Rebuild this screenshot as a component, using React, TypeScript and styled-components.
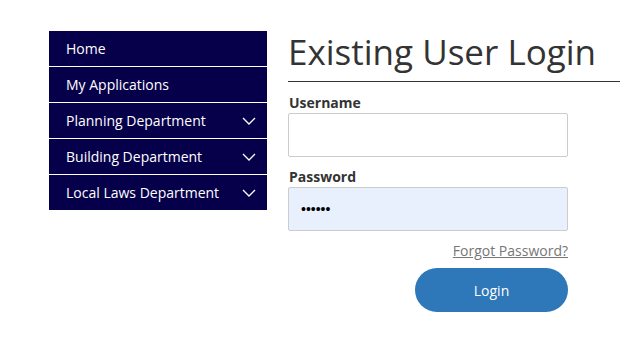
import React from 'react';
import styled, { createGlobalStyle } from 'styled-components';

const GlobalStyle = createGlobalStyle`
  body {
    margin: 0;
    background: #fff;
    font-family: "Open Sans", "Liberation Sans", sans-serif;
    color: #333;
  }
`;

const menu = [
  { label: 'Home', sub: false },
  { label: 'My Applications', sub: false },
  { label: 'Planning Department', sub: true },
  { label: 'Building Department', sub: true },
  { label: 'Local Laws Department', sub: true },
];

function Chevron() {
  return (
    <svg width="14" height="8" viewBox="0 0 14 8" fill="none">
      <path d="M1 1l6 6 6-6" stroke="#fff" strokeWidth="1.3" />
    </svg>
  );
}

export default function App() {
  return (
    <Page>
      <GlobalStyle />
      <Sidebar>
        {menu.map((m) => (
          <MenuItem key={m.label}>
            <span>{m.label}</span>
            {m.sub && <Chevron />}
          </MenuItem>
        ))}
      </Sidebar>
      <Main>
        <H1>Existing User Login</H1>
        <Form>
          <Label>Username</Label>
          <Input type="text" />
          <Label>Password</Label>
          <Input type="password" defaultValue="secret" $filled />
          <Forgot href="#">Forgot Password?</Forgot>
          <Button type="button">Login</Button>
        </Form>
      </Main>
    </Page>
  );
}

const Page = styled.div`
  display: flex;
  align-items: flex-start;
  gap: 21px;
  padding: 31px 0 0 49px;
`;

const Sidebar = styled.nav`
  width: 218px;
  flex-shrink: 0;
  display: flex;
  flex-direction: column;
  gap: 1px;
  background: #fff;
`;

const MenuItem = styled.div`
  height: 35px;
  background: #06004a;
  color: #fff;
  font-size: 14px;
  display: flex;
  align-items: center;
  justify-content: space-between;
  padding: 0 11px 0 17px;
`;

const Main = styled.div`
  flex: 1;
`;

const H1 = styled.h1`
  margin: 0;
  padding: 0 0 8px 0;
  font-size: 35px;
  font-weight: 400;
  line-height: 42px;
  color: #333;
  border-bottom: 1px solid #333;
`;

const Form = styled.form`
  width: 280px;
  display: flex;
  flex-direction: column;
  padding-top: 11px;
`;

const Label = styled.label`
  font-size: 14px;
  font-weight: 700;
  line-height: 20px;
  padding-left: 1px;
`;

const Input = styled.input<{ $filled?: boolean }>`
  box-sizing: border-box;
  height: 44px;
  width: 280px;
  border: 1px solid #ccc;
  border-radius: 2px;
  background: ${(p) => (p.$filled ? '#e8f0fe' : '#fff')};
  padding: 0 12px;
  font-size: 14px;
  margin-bottom: 10px;
  outline: none;
`;

const Forgot = styled.a`
  align-self: flex-end;
  font-size: 14px;
  color: #777;
  text-decoration: underline;
  line-height: 20px;
  margin-top: 0;
`;

const Button = styled.button`
  align-self: flex-end;
  width: 153px;
  height: 44px;
  margin-top: 7px;
  border: none;
  border-radius: 22px;
  background: #2e77b8;
  color: #fff;
  font-family: inherit;
  font-size: 14px;
`;
